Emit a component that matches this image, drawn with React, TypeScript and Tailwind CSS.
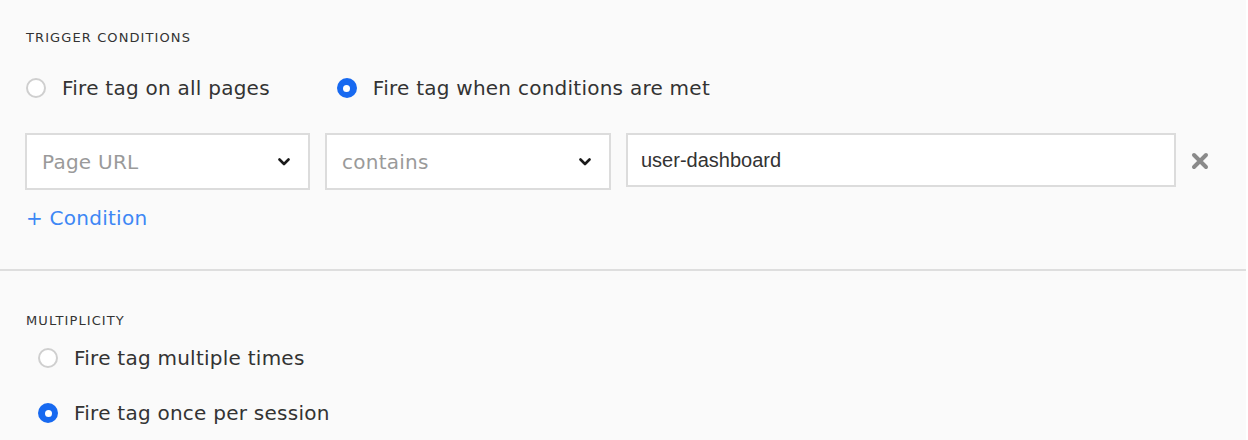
import { useState } from "react";

const verdana = "font-['DejaVu_Sans','Verdana',sans-serif]";
const bodyText = `${verdana} text-[20px] tracking-[0.25px]`;
const sectionLabel = `${verdana} text-[13px] leading-[16px] tracking-[1.1px] uppercase text-[#333]`;

function Radio({
	checked,
	label,
	onSelect,
}: {
	checked: boolean;
	label: string;
	onSelect: () => void;
}) {
	return (
		<button
			type="button"
			onClick={onSelect}
			className="flex h-[24px] items-center gap-[16px] text-left"
		>
			{checked ? (
				<span className="flex h-[20px] w-[20px] items-center justify-center rounded-full bg-[#1769f0]">
					<span className="h-[7px] w-[7px] rounded-full bg-white" />
				</span>
			) : (
				<span className="h-[20px] w-[20px] rounded-full border-2 border-[#cfcfcf] bg-white" />
			)}
			<span className={`${bodyText} leading-[24px] text-[#333]`}>{label}</span>
		</button>
	);
}

function Chevron() {
	return (
		<svg width="12" height="8" viewBox="0 0 12 8" fill="none">
			<path
				d="M1.5 1.5 6 6l4.5-4.5"
				stroke="#1a1a1a"
				strokeWidth="2.6"
				strokeLinecap="round"
				strokeLinejoin="round"
			/>
		</svg>
	);
}

function SelectBox({ placeholder, width }: { placeholder: string; width: string }) {
	return (
		<div
			className={`${width} flex h-[57px] items-center justify-between border-2 border-[#dcdcdc] bg-white pl-[15px] pr-[18px]`}
		>
			<span className={`${bodyText} text-[#9a9a9a]`}>{placeholder}</span>
			<Chevron />
		</div>
	);
}

export default function App() {
	const [fireMode, setFireMode] = useState<"all" | "conditions">("conditions");
	const [multiplicity, setMultiplicity] = useState<"multiple" | "once">("once");

	return (
		<div className="h-[440px] w-[1248px] overflow-hidden bg-white">
			<div className="h-full w-[1246px] bg-[#fafafa]">
				<section className="border-b-2 border-[#dedede] px-[26px] pt-[30px] pb-[39px]">
					<h2 className={sectionLabel}>Trigger conditions</h2>
					<div className="mt-[30px] flex items-center gap-[67px]">
						<Radio
							checked={fireMode === "all"}
							label="Fire tag on all pages"
							onSelect={() => setFireMode("all")}
						/>
						<Radio
							checked={fireMode === "conditions"}
							label="Fire tag when conditions are met"
							onSelect={() => setFireMode("conditions")}
						/>
					</div>
					<div className="-ml-px mt-[33px] flex items-start gap-[15px]">
						<SelectBox placeholder="Page URL" width="w-[285px]" />
						<SelectBox placeholder="contains" width="w-[286px]" />
						<div className="flex h-[54px] w-[550px] items-center border-2 border-[#dcdcdc] bg-white px-[13px]">
							<span className="font-['Liberation_Sans','Arial',sans-serif] text-[20px] text-[#333]">
								user-dashboard
							</span>
						</div>
						<button type="button" className="mt-[19px]">
							<svg width="18" height="18" viewBox="0 0 18 18">
								<path
									d="M3 3l12 12M15 3 3 15"
									stroke="#8a8a8a"
									strokeWidth="4"
									strokeLinecap="round"
								/>
							</svg>
						</button>
					</div>
					<button
						type="button"
						className={`${bodyText} mt-[16px] block leading-[24px] text-[#3d87f5]`}
					>
						+ Condition
					</button>
				</section>
				<section className="px-[26px] pt-[42px]">
					<h2 className={sectionLabel}>Multiplicity</h2>
					<div className="mt-[17px] flex flex-col gap-[31px] pl-[12px]">
						<Radio
							checked={multiplicity === "multiple"}
							label="Fire tag multiple times"
							onSelect={() => setMultiplicity("multiple")}
						/>
						<Radio
							checked={multiplicity === "once"}
							label="Fire tag once per session"
							onSelect={() => setMultiplicity("once")}
						/>
					</div>
				</section>
			</div>
		</div>
	);
}
